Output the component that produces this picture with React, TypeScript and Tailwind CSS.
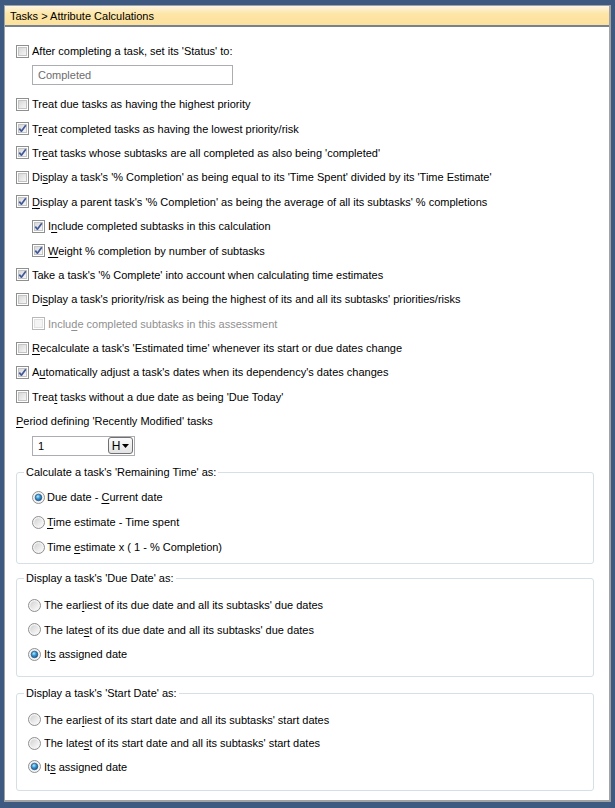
import React from 'react';

type Opt = {
  label: string;
  checked?: boolean;
  sub?: boolean;
  disabled?: boolean;
};

// '&' marks the mnemonic letter, like a Windows resource string
function Label({ text }: { text: string }) {
  const i = text.indexOf('&');
  if (i < 0) return <>{text}</>;
  return (
    <>
      {text.slice(0, i)}
      <span className="underline underline-offset-[2px]">{text[i + 1]}</span>
      {text.slice(i + 2)}
    </>
  );
}

function CheckBox({ checked, disabled }: { checked?: boolean; disabled?: boolean }) {
  return (
    <svg width="13" height="13" viewBox="0 0 13 13" className="shrink-0">
      <defs>
        <linearGradient id="cbFill" x1="0" y1="0" x2="1" y2="1">
          <stop offset="0" stopColor="#d6d6d6" />
          <stop offset="1" stopColor="#f8f8f8" />
        </linearGradient>
      </defs>
      <rect x="0.5" y="0.5" width="12" height="12" fill="#fff" stroke={disabled ? '#b8b8b8' : '#8e8f8f'} />
      <rect
        x="2.5"
        y="2.5"
        width="8"
        height="8"
        fill={disabled ? '#f4f4f4' : 'url(#cbFill)'}
        stroke={disabled ? '#e2e2e2' : '#c4c4c4'}
      />
      {checked && (
        <path d="M3.3 6.6 L5.4 9.2 L9.8 3.2" fill="none" stroke="#41589a" strokeWidth="1.7" strokeLinejoin="round" />
      )}
    </svg>
  );
}

function Radio({ checked }: { checked?: boolean }) {
  return (
    <svg width="13" height="13" viewBox="0 0 13 13" className="shrink-0">
      <defs>
        <linearGradient id="rbFill" x1="0" y1="0" x2="1" y2="1">
          <stop offset="0" stopColor="#d2d2d2" />
          <stop offset="1" stopColor="#fbfbfb" />
        </linearGradient>
        <radialGradient id="rbDot" cx="0.4" cy="0.35" r="0.7">
          <stop offset="0" stopColor="#b4ecff" />
          <stop offset="0.45" stopColor="#3a9ad6" />
          <stop offset="1" stopColor="#124f86" />
        </radialGradient>
      </defs>
      <circle cx="6.5" cy="6.5" r="6" fill="#f4f4f4" stroke="#8e8f8f" />
      <circle cx="6.5" cy="6.5" r="4.3" fill="url(#rbFill)" />
      {checked && <circle cx="6.5" cy="6.5" r="3.3" fill="url(#rbDot)" stroke="#1d4a78" strokeWidth="0.6" />}
    </svg>
  );
}

const options: Opt[] = [
  { label: 'Treat due tasks as having the highest priority' },
  { label: 'T&reat completed tasks as having the lowest priority/risk', checked: true },
  { label: "Tr&eat tasks whose subtasks are all completed as also being 'completed'", checked: true },
  { label: "Di&splay a task's '% Completion' as being equal to its 'Time Spent' divided by its 'Time Estimate'" },
  { label: "&Display a parent task's '% Completion' as being the average of all its subtasks' % completions", checked: true },
  { label: 'I&nclude completed subtasks in this calculation', checked: true, sub: true },
  { label: '&Weight % completion by number of subtasks', checked: true, sub: true },
  { label: "Take a task's '% Complete' into account when calculating time estimates", checked: true },
  { label: "Di&splay a task's priority/risk as being the highest of its and all its subtasks' priorities/risks" },
  { label: 'Inclu&de completed subtasks in this assessment', sub: true, disabled: true },
  { label: "&Recalculate a task's 'Estimated time' whenever its start or due dates change" },
  { label: "A&utomatically adjust a task's dates when its dependency's dates changes", checked: true },
  { label: "Trea&t tasks without a due date as being 'Due Today'" },
];

const groups = [
  {
    title: "Calculate a task's 'Remaining Time' as:",
    box: 'mt-[16px] h-[92px] pt-[12px]',
    rowH: 'h-[25px]',
    indent: 'pl-[15px]',
    gap: 'gap-[2px]',
    items: ['Due date - &Current date', '&Time estimate - Time spent', 'Time &estimate x ( 1 - % Completion)'],
    selected: 0,
  },
  {
    title: "Display a task's 'Due Date' as:",
    box: 'mt-[14px] h-[99px] pt-[14px]',
    rowH: 'h-[24.5px]',
    indent: 'pl-[11px]',
    gap: 'gap-[3px]',
    items: [
      "The ear&liest of its due date and all its subtasks' due dates",
      "The late&st of its due date and all its subtasks' due dates",
      'It&s assigned date',
    ],
    selected: 2,
  },
  {
    title: "Display a task's 'Start Date' as:",
    box: 'mt-[16px] h-[98px] pt-[14px]',
    rowH: 'h-[23.5px]',
    indent: 'pl-[11px]',
    gap: 'gap-[3px]',
    items: [
      "The ear&liest of its start date and all its subtasks' start dates",
      "The late&st of its start date and all its subtasks' start dates",
      'It&s assigned date',
    ],
    selected: 2,
  },
];

export default function App() {
  return (
    <div className="w-[615px] h-[808px] bg-[#3e5a80] pt-[5px] pl-[4px] overflow-hidden font-['Liberation_Sans',Arial,sans-serif] text-[11px] leading-[14px] text-black">
      <div className="w-[607px] h-[797px] bg-white border-t border-l border-[#9da3aa] border-r-2 border-b-2 border-r-[#a3a3a3] border-b-[#a3a3a3]">
        <div className="h-[21px] pl-[5px] flex items-center bg-gradient-to-b from-[#fff6e2] via-[#fde6a8] via-40% to-[#fde19c] border-b-2 border-[#76828f]">
          Tasks &gt; Attribute Calculations
        </div>

        <div className="pt-[12px] pl-[11px]">
          <div className="h-[24px] flex items-center gap-[3px]">
            <CheckBox />
            <span>After completing a task, set its 'Status' to:</span>
          </div>
          <div className="mt-[2px] ml-[16px] w-[201px] h-[20px] border border-[#abadb3] flex items-center pl-[5px] text-[#6d6d6d]">
            Completed
          </div>

          <div className="mt-[7px]">
            {options.map((o) => (
              <div
                key={o.label}
                className={`h-[24.4px] flex items-center gap-[3px] ${o.sub ? 'pl-[16px]' : ''} ${
                  o.disabled ? 'text-[#8f8f8f]' : ''
                }`}
              >
                <CheckBox checked={o.checked} disabled={o.disabled} />
                <span className="whitespace-nowrap">
                  <Label text={o.label} />
                </span>
              </div>
            ))}
            <div className="h-[24.4px] flex items-center">
              <Label text="&Period defining 'Recently Modified' tasks" />
            </div>
          </div>

          <div className="mt-[2.4px] ml-[16px] w-[103px] h-[20px] border border-[#abadb3] flex items-center justify-between pl-[5px] pr-[1px]">
            <span>1</span>
            <div className="w-[25px] h-[17px] rounded-[3px] border border-[#707070] bg-gradient-to-b from-[#fbfbfb] to-[#e3e3e3] flex items-center justify-center gap-[2px]">
              <span className="text-[12px]">H</span>
              <svg width="7" height="4" viewBox="0 0 7 4">
                <path d="M0 0 H7 L3.5 4 Z" fill="#000" />
              </svg>
            </div>
          </div>

          {groups.map((g) => (
            <div
              key={g.title}
              className={`relative w-[578px] border border-[#d5dfe5] rounded-[3px] ${g.box} ${g.indent}`}
            >
              <span className="absolute -top-[8px] left-[7px] bg-white px-[2px]">{g.title}</span>
              {g.items.map((it, i) => (
                <div key={it} className={`${g.rowH} flex items-center ${g.gap}`}>
                  <Radio checked={i === g.selected} />
                  <span className="whitespace-nowrap">
                    <Label text={it} />
                  </span>
                </div>
              ))}
            </div>
          ))}
        </div>
      </div>
    </div>
  );
}
